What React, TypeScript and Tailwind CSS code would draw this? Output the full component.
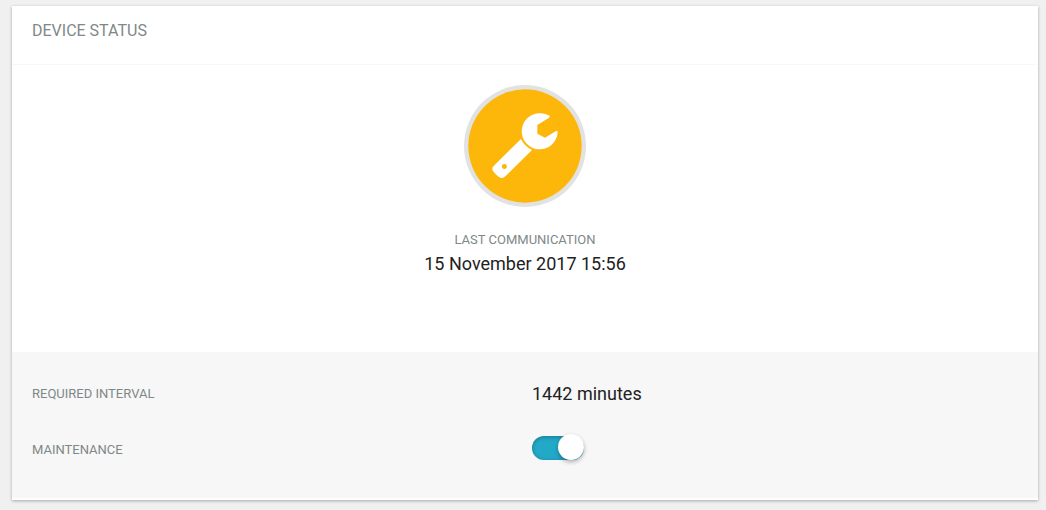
import { useState } from "react";

function WrenchBadge() {
  return (
    <svg className="size-[122px]" viewBox="27 27 366 366" role="img" aria-label="Maintenance mode">
      <circle cx="210" cy="210" r="183" fill="#e1e2e1" />
      <circle cx="210" cy="210" r="170" fill="#fdb70b" />
      <path
        d="M281 126 L247 147 V173 L270 185 L302 166 Q308 163 308 169 A54 54 0 1 1 255 112 Q268 112 281 118 Q287 121 281 126 Z"
        fill="#fff"
      />
      <path
        fillRule="evenodd"
        d="M198 189 Q208 211 231 222 L151 301 Q142 310 132 303 Q121 295 114 285 Q109 277 116 270 Z M148 264 a7.500 7.500 0 1 0 0.100 0 Z"
        fill="#fff"
      />
    </svg>
  );
}

export default function App() {
  const [maintenance, setMaintenance] = useState(true);

  return (
    <main className="min-h-screen bg-[#f0f0f0] pt-1.5 pr-2 pb-2.5 pl-3 font-[Roboto,sans-serif] text-[#7f8888]">
      <section className="bg-white pb-0.5 shadow-[0_1px_3px_rgba(0,0,0,0.3)]">
        <header className="border-b border-[#f8f8f8] px-5 pt-[13px] pb-[21px]">
          <h1 className="text-base leading-6">DEVICE STATUS</h1>
        </header>

        <div className="flex flex-col items-center px-5 pt-5 pb-[74px]">
          <WrenchBadge />
          <p className="mt-[23px] text-[13px] leading-5">LAST COMMUNICATION</p>
          <p className="text-lg leading-7 text-[#212121]">15 November 2017 15:56</p>
        </div>

        <div className="grid grid-cols-2 items-start gap-x-3.5 gap-y-7 bg-[#f7f7f7] px-5 pt-7 pb-[34px]">
          <p className="text-[13px] leading-7">REQUIRED INTERVAL</p>
          <p className="text-lg leading-7 text-[#212121]">1442 minutes</p>
          <label htmlFor="maintenance" className="text-[13px] leading-7">
            MAINTENANCE
          </label>
          <input
            id="maintenance"
            type="checkbox"
            role="switch"
            checked={maintenance}
            onChange={(e) => setMaintenance(e.target.checked)}
            className="flex h-6 w-[52px] cursor-pointer appearance-none items-end rounded-full bg-[#b8bcbc] shadow-[inset_0_1px_4px_rgba(0,0,0,0.3)] before:size-[26px] before:shrink-0 before:rounded-full before:bg-white before:shadow-[0_2px_4px_rgba(0,0,0,0.3)] before:content-[''] checked:justify-end checked:bg-[#23a9c8]"
          />
        </div>
      </section>
    </main>
  );
}
